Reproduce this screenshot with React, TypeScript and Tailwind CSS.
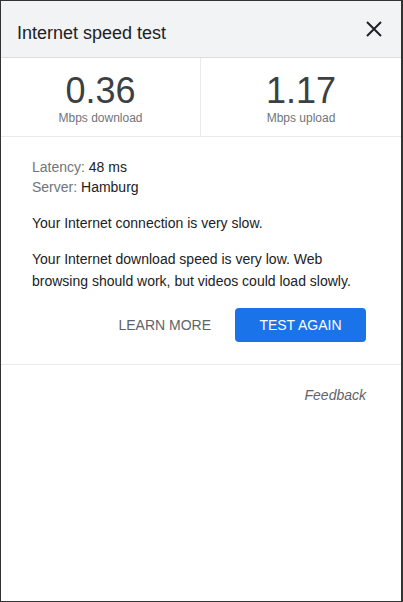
import React from 'react';

export default function App() {
  return (
    <div
      className="h-[602px] w-[403px] border-t border-l border-b border-r-2 border-[#333333] bg-white text-[#202124] flex flex-col overflow-hidden"
      style={{ fontFamily: '"Liberation Sans", Arial, sans-serif' }}
    >
      {/* Header */}
      <div className="h-[57px] shrink-0 bg-[#f1f3f4] border-b border-[#dadce0] flex items-center justify-between pl-[16px] pr-[15px]">
        <h1 className="text-[18px] text-[#202124] pt-[8px]">Internet speed test</h1>
        <button className="h-6 w-6 flex items-center justify-center text-[#202124]">
          <svg width="18" height="18" viewBox="0 0 18 18">
            <path d="M2 2 L16 16 M16 2 L2 16" stroke="#202124" strokeWidth="2" />
          </svg>
        </button>
      </div>

      {/* Speeds */}
      <div className="grid grid-cols-2 h-[79px] shrink-0 border-b border-[#e8eaed]">
        <div className="flex flex-col items-center pt-[14px] border-r border-[#e8eaed]">
          <span className="text-[36px] leading-[38px] text-[#3c4043]">0.36</span>
          <span className="text-[12px] leading-[14px] text-[#70757a] mt-[1px]">Mbps download</span>
        </div>
        <div className="flex flex-col items-center pt-[14px]">
          <span className="text-[36px] leading-[38px] text-[#3c4043]">1.17</span>
          <span className="text-[12px] leading-[14px] text-[#70757a] mt-[1px]">Mbps upload</span>
        </div>
      </div>

      {/* Details */}
      <div className="px-[31px] pt-[20px] pb-[22px] border-b border-[#e8eaed] text-[14px]">
        <div className="leading-[20px]">
          <div>
            <span className="text-[#70757a]">Latency:</span> 48 ms
          </div>
          <div>
            <span className="text-[#70757a]">Server:</span> Hamburg
          </div>
        </div>
        <p className="mt-[16px] leading-[20px]">Your Internet connection is very slow.</p>
        <p className="mt-[15px] leading-[22px] pr-[2px]">
          Your Internet download speed is very low. Web browsing should work, but videos could load slowly.
        </p>
        <div className="flex items-center justify-end gap-[24px] mt-[16px] pr-[4px]">
          <button className="text-[14px] text-[#5f6368]">LEARN MORE</button>
          <button className="h-[34px] w-[131px] rounded-[4px] bg-[#1a73e8] text-white text-[14px]">
            TEST AGAIN
          </button>
        </div>
      </div>

      {/* Footer */}
      <div className="flex justify-end px-[35px] pt-[20px]">
        <a className="text-[14px] italic text-[#5f6368]">Feedback</a>
      </div>
    </div>
  );
}
